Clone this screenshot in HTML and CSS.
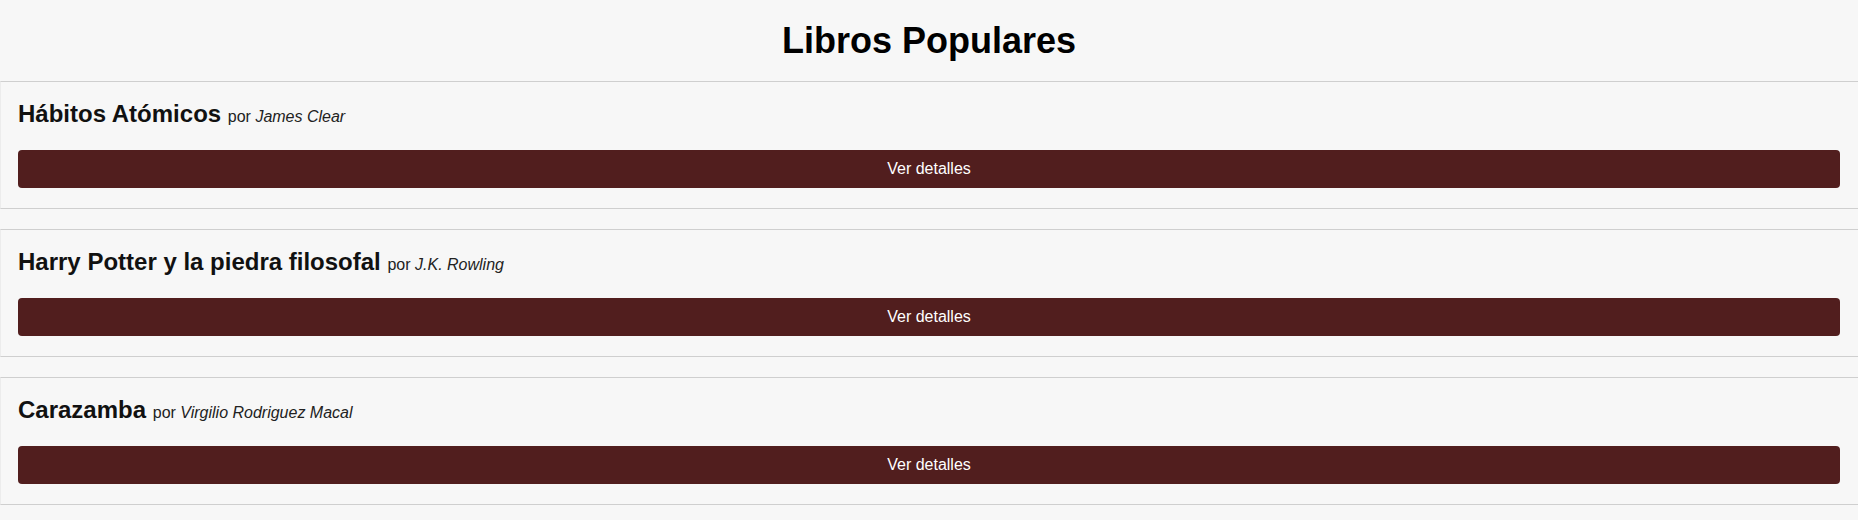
FILE: index.html
```html
<!DOCTYPE html>
<html lang="es">
<head>
<meta charset="utf-8">
<title>Libros Populares</title>
<link rel="stylesheet" href="styles.css">
</head>
<body>
<header class="page-header">
  <h1 class="page-title">Libros Populares</h1>
</header>
<main class="book-list">
  <article class="book-card">
    <h2 class="book-heading"><span class="book-title">Hábitos Atómicos</span> <span class="book-by">por <em class="book-author">James Clear</em></span></h2>
    <button class="details-btn" type="button">Ver detalles</button>
  </article>
  <article class="book-card">
    <h2 class="book-heading"><span class="book-title">Harry Potter y la piedra filosofal</span> <span class="book-by">por <em class="book-author">J.K. Rowling</em></span></h2>
    <button class="details-btn" type="button">Ver detalles</button>
  </article>
  <article class="book-card">
    <h2 class="book-heading"><span class="book-title">Carazamba</span> <span class="book-by">por <em class="book-author">Virgilio Rodriguez Macal</em></span></h2>
    <button class="details-btn" type="button">Ver detalles</button>
  </article>
</main>
</body>
</html>
```

FILE: styles.css
```css
html, body {
  margin: 0;
  padding: 0;
  background: #f7f7f7;
  font-family: "Liberation Sans", Arial, sans-serif;
  color: #000;
}

.page-header {
  padding: 20px 0;
  height: 41px;
  text-align: center;
}

.page-title {
  margin: 0;
  font-size: 36px;
  font-weight: bold;
  line-height: 41px;
}

.book-list {
  display: flex;
  flex-direction: column;
  gap: 20px;
}

.book-card {
  border-top: 1px solid #cfcfcf;
  border-bottom: 1px solid #cfcfcf;
  border-left: 1px solid #ececec;
  padding: 20px 18px 20px 17px;
  display: flex;
  flex-direction: column;
  gap: 24px;
  background: #f7f7f7;
}

.book-heading {
  margin: 0;
  font-size: 24px;
  line-height: 24px;
  height: 24px;
  font-weight: normal;
}

.book-title {
  font-weight: bold;
  color: #111;
}

.book-by {
  font-size: 16px;
  line-height: 1;
  color: #222;
}

.book-author {
  font-style: italic;
}

.details-btn {
  display: block;
  width: 100%;
  height: 38px;
  border: none;
  border-radius: 4px;
  background: #511e1e;
  color: #fff;
  font-family: "Liberation Sans", Arial, sans-serif;
  font-size: 16px;
  line-height: 1;
  padding: 0;
  margin: 0;
  cursor: pointer;
}
```
